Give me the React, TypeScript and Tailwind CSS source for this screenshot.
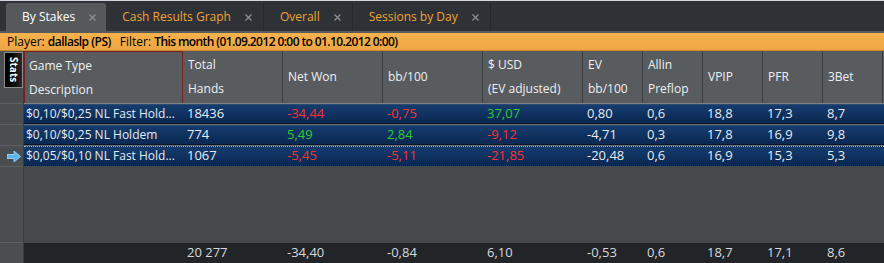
import React from 'react';

const cols = 'grid grid-cols-[159px_100px_100px_100px_100px_60px_60px_60px_60px_60px]';

type Cell = { v: string; c?: 'red' | 'green' };

const rows: Cell[][] = [
  [{ v: '$0,10/$0,25 NL Fast Hold...' }, { v: '18436' }, { v: '-34,44', c: 'red' }, { v: '-0,75', c: 'red' }, { v: '37,07', c: 'green' }, { v: '0,80' }, { v: '0,6' }, { v: '18,8' }, { v: '17,3' }, { v: '8,7' }],
  [{ v: '$0,10/$0,25 NL Holdem' }, { v: '774' }, { v: '5,49', c: 'green' }, { v: '2,84', c: 'green' }, { v: '-9,12', c: 'red' }, { v: '-4,71' }, { v: '0,3' }, { v: '17,8' }, { v: '16,9' }, { v: '9,8' }],
  [{ v: '$0,05/$0,10 NL Fast Hold...' }, { v: '1067' }, { v: '-5,45', c: 'red' }, { v: '-5,11', c: 'red' }, { v: '-21,85', c: 'red' }, { v: '-20,48' }, { v: '0,6' }, { v: '16,9' }, { v: '15,3' }, { v: '5,3' }],
];

const headers = [
  ['Game Type', 'Description'],
  ['Total', 'Hands'],
  ['Net Won'],
  ['bb/100'],
  ['$ USD', '(EV adjusted)'],
  ['EV', 'bb/100'],
  ['Allin', 'Preflop'],
  ['VPIP'],
  ['PFR'],
  ['3Bet'],
];

const totals = ['', '20 277', '-34,40', '-0,84', '6,10', '-0,53', '0,6', '18,7', '17,1', '8,6'];

const Close = () => (
  <svg width="7" height="7" viewBox="0 0 7 7" className="ml-[14px] mt-px">
    <path d="M0.5 0.5 L6.5 6.5 M6.5 0.5 L0.5 6.5" stroke="#8d9094" strokeWidth="1.2" />
  </svg>
);

const Tab = ({ label, active }: { label: string; active?: boolean }) => (
  <div
    className={
      active
        ? 'h-[28px] flex items-center pl-4 pr-[10px] rounded-t-[3px] bg-[#55595c] text-white'
        : 'h-[28px] flex items-center pl-4 pr-[11px] border-r border-[#24282b] text-[#f0a232]'
    }
  >
    <span>{label}</span>
    <Close />
  </div>
);

function colorOf(c?: 'red' | 'green') {
  if (c === 'red') return 'text-[#ff2f2f]';
  if (c === 'green') return 'text-[#2fc72f]';
  return 'text-[#e4ebf2]';
}

export default function App() {
  return (
    <div
      className="w-[884px] h-[263px] overflow-hidden flex flex-col bg-[#46494c] text-[12px]"
      style={{ fontFamily: '"Open Sans", "Noto Sans", sans-serif' }}
    >
      <div className="h-px bg-[#cfd6de]" />
      <div className="h-[30px] bg-[#2e3236] flex items-end pl-[6px] text-[12px]">
        <Tab label="By Stakes" active />
        <Tab label="Cash Results Graph" />
        <Tab label="Overall" />
        <Tab label="Sessions by Day" />
      </div>
      <div className="h-[2px] bg-[#575b5f]" />
      <div className="h-[18px] bg-gradient-to-b from-[#f6b24d] to-[#eda543] border-b border-[#c88a30] flex items-center pl-[7px] text-black leading-none">
        <span>Player:&nbsp;</span>
        <span className="font-semibold tracking-[-0.5px]">dallaslp (PS)</span>
        <span className="ml-[9px]">Filter:&nbsp;</span>
        <span className="font-semibold tracking-[-0.6px]">This month (01.09.2012 0:00 to 01.10.2012 0:00)</span>
      </div>

      <div className="flex-1 flex min-h-0">
        {/* left strip */}
        <div className="w-[24px] flex flex-col bg-[#4b4e51] border-r border-[#3a3d40]">
          <div className="h-[53px] pt-px pl-[4px] border-b border-[#5e6164]">
            <div className="w-[19px] h-[36px] border border-[#8a8d90] bg-gradient-to-r from-[#000] to-[#2a2a2a] flex items-center justify-center">
              <span className="text-white font-bold text-[10px] leading-none [writing-mode:vertical-rl]">Stats</span>
            </div>
          </div>
          <div className="h-[21px] border-b border-[#5e6164]" />
          <div className="h-[21px] border-b border-[#5e6164]" />
          <div className="h-[21px] border-b border-[#5e6164] flex items-center pl-[7px]">
            <svg width="14" height="11" viewBox="0 0 14 11">
              <path d="M0 3.5 H7 V0 L13.5 5.5 L7 11 V7.5 H0 Z" fill="#5cb4ec" stroke="#a8dcff" strokeWidth="0.8" />
            </svg>
          </div>
          <div className="flex-1 border-b border-[#5e6164]" />
          <div className="h-[20px]" />
        </div>

        {/* grid */}
        <div className="flex-1 flex flex-col">
          <div className={`${cols} h-[53px] bg-[#595c5f] border-b border-[#7d8185] text-[#eef0f2] text-[12px] leading-[24px]`}>
            {headers.map((h, i) => (
              <div
                key={i}
                className={
                  i === 0
                    ? 'flex flex-col justify-center pl-[4px] border-l border-t border-r border-[#7a1f1f]'
                    : 'flex flex-col justify-center pl-[5px] border-r border-[#3b3e41]'
                }
              >
                {h.map((t) => (
                  <span key={t}>{t}</span>
                ))}
              </div>
            ))}
          </div>

          <div className="flex flex-col gap-px bg-[#6a6e72]">
            {rows.map((r, ri) => (
              <div
                key={ri}
                className={`${cols} h-[20px] bg-gradient-to-b from-[#153c6e] to-[#0a2852] border-b border-[#06152b] ${
                  ri === 2 ? 'border-t border-dotted border-t-[#a8b0b8]' : 'border-t border-t-[#2a4a72]'
                } items-center`}
              >
                {r.map((c, ci) => (
                  <span
                    key={ci}
                    className={`${ci === 0 ? 'pl-[2px] text-[12px]' : 'pl-[4px] text-[13px]'} whitespace-nowrap overflow-hidden ${colorOf(c.c)}`}
                  >
                    {c.v}
                  </span>
                ))}
              </div>
            ))}
          </div>

          <div className="flex-1 bg-[#46494c]" />

          <div className={`${cols} h-[20px] bg-[#222528] text-[#d6d9dc] text-[13px] items-center`}>
            {totals.map((t, i) => (
              <span key={i} className="pl-[4px]">
                {t}
              </span>
            ))}
          </div>
        </div>
      </div>
    </div>
  );
}
